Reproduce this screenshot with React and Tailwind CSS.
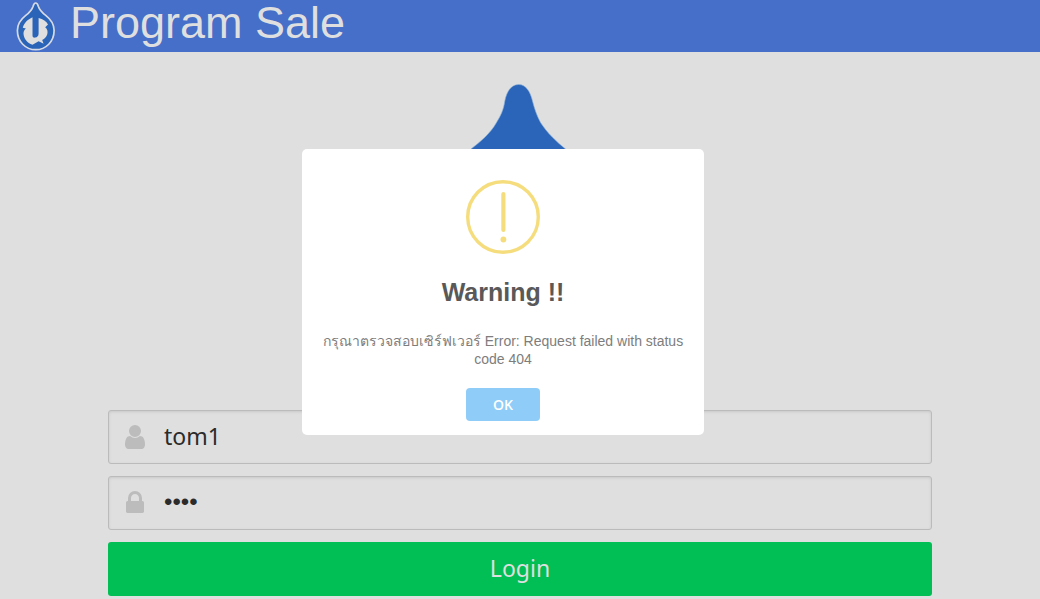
const DROP =
  "M118.700 4.500C111 4.500 106.500 12 104.800 21C103.600 30 100.500 36 96.500 42.500C90 54 80 62 71 69C30 104 4 146 4 202C4 270 56 318 118.700 318C182 318 236 270 236 202C236 146 206 104 165.500 69C157 62 147 53 140.500 42.500C137 36 134.500 29 132.500 21C130.500 12 126 4.500 118.700 4.500Z";

function HeaderLogo() {
  return (
    <svg viewBox="0 0 40 50" className="h-[50px] w-10" aria-hidden="true">
      <path
        d="M19.700 2C17.900 2 17.500 3.600 17.100 5.200C16 9.200 13.500 11.500 9.500 14.700C4 19 1.400 23.600 1.400 29.500C1.400 40.500 9.500 48.700 19.700 48.700C30 48.700 38.100 40.500 38.100 29.500C38.100 23.600 35.500 19 30 14.700C26 11.500 23.500 9.200 22.300 5.200C21.900 3.600 21.500 2 19.700 2Z"
        fill="#2a64b8"
        stroke="#d6dae4"
        strokeWidth="1.700"
      />
      <path
        d="M16.500 16.200V34.500C16.500 36.300 17.800 36.800 19.200 36.600C21.300 36.200 22.600 35 22.600 32.500V17C27 18.300 30.500 20.300 32 23.500L29.200 26.300C31.600 28 32 30.800 31.200 33.400C30.300 36 28.600 37.800 26.200 39L27.600 42.800L22.600 40.200L16.500 43.800C11 41.600 7.600 37.400 7.500 32.400C7.500 30.300 8.300 28.800 9.900 27.400L6.800 26.800C8 21.800 11.600 18.400 16.500 16.200Z"
        fill="#dfdfdf"
      />
    </svg>
  );
}

function UserIcon() {
  return (
    <svg viewBox="0 0 1280 1792" className="h-7 w-5" fill="currentColor" aria-hidden="true">
      <path d="M1280 1399q0 109-62.500 187t-150.500 78h-854q-88 0-150.500-78t-62.500-187q0-85 8.500-160.500t31.500-152 58.500-131 94-89 134.500-34.500q131 128 313 128t313-128q76 0 134.500 34.500t94 89 58.500 131 31.500 152 8.500 160.500zm-256-887q0 159-112.500 271.500t-271.500 112.500-271.500-112.500-112.500-271.500 112.500-271.500 271.500-112.500 271.500 112.500 112.500 271.500z" />
    </svg>
  );
}

function LockIcon() {
  return (
    <svg viewBox="0 0 1152 1792" className="h-7 w-[18px]" fill="currentColor" aria-hidden="true">
      <path d="M320 768h512v-192q0-106-75-181t-181-75-181 75-75 181v192zm832 96v576q0 40-28 68t-68 28h-960q-40 0-68-28t-28-68v-576q0-40 28-68t68-28h32v-192q0-184 132-316t316-132 316 132 132 316v192h32q40 0 68 28t28 68z" />
    </svg>
  );
}

function Field({ id, label, icon, fontClass, ...input }) {
  return (
    <div className="flex h-[54px] items-center rounded-[3px] border border-[#bbbbbb] bg-[#dfdfdf] shadow-[inset_0_1px_3px_#c8c8c8]">
      <label htmlFor={id} className="flex w-[52px] justify-center text-[#bcbcbc]">
        <span className="sr-only">{label}</span>
        {icon}
      </label>
      <input
        id={id}
        className={`h-full min-w-0 flex-1 bg-transparent pr-4 pb-[2px] pl-[3px] leading-9 text-[#2b2b2b] outline-none ${fontClass}`}
        {...input}
      />
    </div>
  );
}

function WarningDialog() {
  return (
    <div className="fixed inset-0 flex items-center justify-center pr-[34px] pb-[15px]">
      <div
        role="alertdialog"
        aria-modal="true"
        aria-labelledby="warning-title"
        aria-describedby="warning-text"
        className="flex w-[402px] flex-col items-center rounded-[5px] bg-white px-5 pt-[31px] pb-[14px] text-center font-['Liberation_Sans',Arial,sans-serif]"
      >
        <svg viewBox="0 0 74 74" className="size-[74px]" aria-hidden="true">
          <circle cx="37" cy="37" r="35.300" fill="none" stroke="#f5dd7e" strokeWidth="3.400" />
          <rect x="35.300" y="12" width="4.200" height="40" rx="2.100" fill="#f5dd7e" />
          <circle cx="37.400" cy="59.500" r="2.900" fill="#f5dd7e" />
        </svg>
        <h2 id="warning-title" className="mt-5 text-[25px] leading-9 font-bold text-[#595959]">
          Warning !!
        </h2>
        <p id="warning-text" className="mt-[22px] text-sm leading-[18px] text-[#7d7d7d]">
          กรุณาตรวจสอบเซิร์ฟเวอร์ Error: Request failed with status code 404
        </p>
        <button
          type="button"
          className="mt-5 h-[33px] w-[74px] rounded-[4px] bg-[#8fcdf8] font-['Open_Sans',sans-serif] text-sm font-semibold text-white"
        >
          OK
        </button>
      </div>
    </div>
  );
}

export default function App() {
  return (
    <div className="min-h-screen bg-[#dfdfdf] font-['Noto_Sans',sans-serif]">
      <header className="flex h-[52px] items-center gap-[14px] bg-[#466fc9] pl-4">
        <HeaderLogo />
        <h1 className="pb-1.5 font-['Liberation_Sans',Arial,sans-serif] text-[45px] leading-[52px] text-[#dfdfdf]">
          Program Sale
        </h1>
      </header>
      <main className="px-[108px] pt-7">
        <svg viewBox="0 0 240 320" className="mx-auto h-[320px] w-60" aria-hidden="true">
          <path d={DROP} fill="#2b65ba" stroke="#8fb3d6" strokeWidth="0.600" />
        </svg>
        <form className="mt-[10px] flex flex-col gap-3 pb-[3px]" onSubmit={(e) => e.preventDefault()}>
          <Field
            id="username"
            label="Username"
            icon={<UserIcon />}
            fontClass="text-[23px]"
            type="text"
            defaultValue="tom1"
          />
          <Field
            id="password"
            label="Password"
            icon={<LockIcon />}
            fontClass="font-['Liberation_Sans',Arial,sans-serif] text-2xl"
            type="password"
            defaultValue="1234"
          />
          <button type="submit" className="h-[54px] rounded-[3px] bg-[#02bf55] pb-[2px] text-[23px] text-[#dfdfdf]">
            Login
          </button>
        </form>
      </main>
      <WarningDialog />
    </div>
  );
}
